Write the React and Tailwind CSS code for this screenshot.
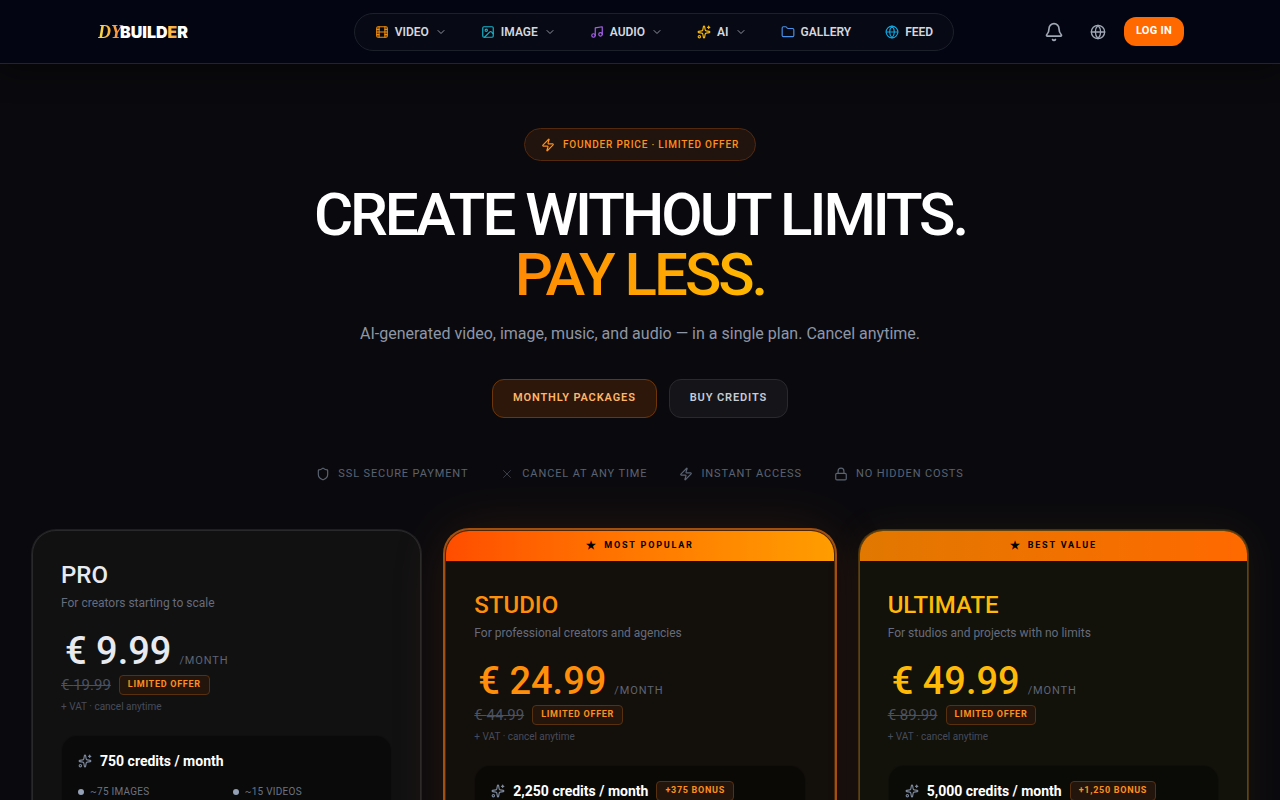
import React, { useState } from 'react';
import clsx from 'clsx';
import {
  Bell,
  ChevronDown,
  Film,
  Folder,
  Globe,
  Image,
  Lock,
  Music,
  Shield,
  Sparkles,
  X,
  Zap,
} from 'lucide-react';

const NAV_ITEMS = [
  { label: 'VIDEO', icon: Film, color: 'text-[#f08c0a]', menu: true },
  { label: 'IMAGE', icon: Image, color: 'text-[#14b4cc]', menu: true },
  { label: 'AUDIO', icon: Music, color: 'text-[#a763e8]', menu: true },
  { label: 'AI', icon: Sparkles, color: 'text-[#f5b70c]', menu: true },
  { label: 'GALLERY', icon: Folder, color: 'text-[#4a90e8]' },
  { label: 'FEED', icon: Globe, color: 'text-[#10a5e0]' },
];

const TRUST_ITEMS = [
  { label: 'SSL SECURE PAYMENT', icon: Shield, stroke: 2 },
  { label: 'CANCEL AT ANY TIME', icon: X, stroke: 1 },
  { label: 'INSTANT ACCESS', icon: Zap, stroke: 2 },
  { label: 'NO HIDDEN COSTS', icon: Lock, stroke: 2 },
];

const PLANS = [
  {
    name: 'PRO',
    tagline: 'For creators starting to scale',
    price: '9.99',
    oldPrice: '19.99',
    credits: '750',
    features: ['~75 IMAGES', '~15 VIDEOS'],
    card: 'border-[#29292b] bg-[#111112] shadow-[0_0_0_1px_#1f1f21]',
    accent: 'text-[#e8eaf0]',
  },
  {
    name: 'STUDIO',
    tagline: 'For professional creators and agencies',
    price: '24.99',
    oldPrice: '44.99',
    credits: '2,250',
    bonus: '+375 BONUS',
    ribbon: 'MOST POPULAR',
    features: ['~225 IMAGES', '~45 VIDEOS'],
    card: 'border-[#4d260c] bg-[#130f0b] shadow-[0_0_0_2px_#a3500f,0_0_60px_rgba(255,115,0,0.12)]',
    ribbonColor: 'bg-linear-to-r from-[#ff4d00] to-[#ff9d00]',
    accent: 'text-[#ff8f0a]',
  },
  {
    name: 'ULTIMATE',
    tagline: 'For studios and projects with no limits',
    price: '49.99',
    oldPrice: '89.99',
    credits: '5,000',
    bonus: '+1,250 BONUS',
    ribbon: 'BEST VALUE',
    features: ['~500 IMAGES', '~100 VIDEOS'],
    card: 'border-[#60430f] bg-[#12110a] shadow-[0_0_0_1px_#4a340f,0_0_40px_rgba(254,154,0,0.07)]',
    ribbonColor: 'bg-linear-to-r from-[#e17800] to-[#ff6900]',
    accent: 'text-[#ffba08]',
  },
];

const Logo = () => (
  <a href="#" aria-label="DX Builder" className="flex w-44 items-center pl-0.5 leading-none">
    <span className="bg-linear-to-r from-[#f7e04a] to-[#f7793b] bg-clip-text pr-0.5 font-['Liberation_Serif'] text-lg leading-none font-bold italic text-transparent">
      DY
    </span>
    <span className="-ml-1 font-['Inter'] text-base font-black text-white">
      BUILD
      <span className="bg-linear-to-r from-[#ffc640] to-[#f79a4a] bg-clip-text text-transparent">E</span>R
    </span>
  </a>
);

const Header = () => (
  <header className="border-b border-[#242428] bg-[#030612] shadow-[0_4px_30px_rgba(0,0,0,0.5)]">
    <div className="flex h-[63px] items-center justify-between px-24">
      <Logo />

      <nav className="flex h-[38px] items-center gap-0.5 rounded-full border border-[#1c2029] bg-[#070a14] px-1">
        {NAV_ITEMS.map(({ label, icon: Icon, color, menu }) => (
          <button
            key={label}
            type="button"
            className="flex items-center gap-1.5 px-4 text-xs font-semibold text-[#d3d7df]"
          >
            <Icon size={14} className={color} />
            {label}
            {menu && <ChevronDown size={12} className="text-[#8d93a0]" />}
          </button>
        ))}
      </nav>

      <div className="flex items-center gap-2">
        <button type="button" aria-label="Notifications" className="flex size-9 items-center justify-center text-[#a0a7b5]">
          <Bell size={20} />
        </button>
        <button type="button" aria-label="Language" className="flex size-9 items-center justify-center text-[#a0a7b5]">
          <Globe size={16} />
        </button>
        <button type="button" className="h-[29px] rounded-xl bg-[#ff6900] px-3 text-[11px] font-bold tracking-wide text-white">
          LOG IN
        </button>
      </div>
    </div>
  </header>
);

const Hero = () => {
  const [tab, setTab] = useState('monthly');

  const tabClass = (name) =>
    clsx(
      'h-[39px] rounded-xl border px-5 text-[11px] font-semibold tracking-[0.08em]',
      tab === name
        ? 'border-[#6e3608] bg-[#2d170b] text-[#ffb668]'
        : 'border-[#29292e] bg-[#151519] text-[#c8ccd6]'
    );

  return (
    <section className="flex flex-col items-center px-8 pt-16 text-center">
      <div className="flex h-[33px] items-center gap-2 rounded-full border border-[#54290d] bg-[#21130d] px-4 text-[10px] font-medium tracking-[0.08em] text-[#ff8f1c]">
        <Zap size={14} />
        FOUNDER PRICE · LIMITED OFFER
      </div>

      <h1 className="mt-6 text-6xl leading-none font-medium tracking-tighter text-white">
        CREATE WITHOUT LIMITS.
        <br />
        <span className="bg-linear-to-r from-[#ff8904] to-[#ffb900] bg-clip-text text-transparent">
          PAY LESS.
        </span>
      </h1>

      <p className="mt-4 text-base leading-[26px] text-[#8f96a6]">
        AI-generated video, image, music, and audio — in a single plan. Cancel anytime.
      </p>

      <div className="mt-8 flex gap-3">
        <button type="button" className={tabClass('monthly')} onClick={() => setTab('monthly')}>
          MONTHLY PACKAGES
        </button>
        <button type="button" className={tabClass('credits')} onClick={() => setTab('credits')}>
          BUY CREDITS
        </button>
      </div>

      <ul className="mt-12 flex flex-wrap justify-center gap-8 text-[11px] leading-4 tracking-[0.08em] text-[#5b6372]">
        {TRUST_ITEMS.map(({ label, icon: Icon, stroke }) => (
          <li key={label} className="flex items-center gap-2">
            <Icon size={14} strokeWidth={stroke} />
            {label}
          </li>
        ))}
      </ul>
    </section>
  );
};

const Badge = ({ children }) => (
  <span className="flex h-5 items-center rounded-sm border border-[#57300f] bg-[#24150c] px-2 text-[9px] font-bold tracking-[0.08em] text-[#ff8f1c]">
    {children}
  </span>
);

const PlanCard = ({ plan }) => (
  <article className={clsx('overflow-hidden rounded-3xl border', plan.card)}>
    {plan.ribbon && (
      <div
        className={clsx(
          'flex h-[30px] items-center justify-center gap-2 text-[9px] font-bold tracking-[0.2em] text-black',
          plan.ribbonColor
        )}
      >
        <span className="text-[11px] tracking-normal">★</span>
        {plan.ribbon}
      </div>
    )}

    <div className="p-7">
      <h2 className={clsx('text-2xl font-medium', plan.accent)}>{plan.name}</h2>
      <p className="mt-1 text-xs text-[#666c7b]">{plan.tagline}</p>

      {/* Price */}
      <div className="mt-5 flex items-baseline gap-2 pl-1">
        <span className={clsx('text-[38px] leading-10 font-medium', plan.accent)}>€ {plan.price}</span>
        <span className="text-[11px] tracking-[0.08em] text-[#5f6573]">/MONTH</span>
      </div>
      <div className="mt-1 flex items-center gap-2">
        <s className="text-[15px] leading-5 text-[#4a5162]">€ {plan.oldPrice}</s>
        <Badge>LIMITED OFFER</Badge>
      </div>
      <p className="mt-1 text-[10px] leading-4 text-[#474c5a]">+ VAT · cancel anytime</p>

      {/* Credits */}
      <div className="mt-5 rounded-2xl border border-white/2 bg-black/40 p-4">
        <div className="flex h-[18px] items-center gap-2">
          <Sparkles size={14} className="text-[#7b879b]" />
          <span className="text-sm font-bold text-white">{plan.credits} credits / month</span>
          {plan.bonus && <Badge>{plan.bonus}</Badge>}
        </div>
        <ul className="mt-3.5 grid grid-cols-2 gap-x-3 gap-y-2 text-[10px] leading-4 tracking-wide text-[#6c7382]">
          {plan.features.map((feature) => (
            <li key={feature} className="flex items-center gap-1.5">
              <span className="size-1.5 rounded-full bg-[#94a0b5]" />
              {feature}
            </li>
          ))}
        </ul>
      </div>
    </div>
  </article>
);

const App = () => (
  <div className="min-h-screen bg-[#0a0a0e] font-['Roboto',sans-serif]">
    <Header />
    <main>
      <Hero />
      <section className="mt-12 grid grid-cols-3 items-start gap-6 px-8 pb-16">
        {PLANS.map((plan) => (
          <PlanCard key={plan.name} plan={plan} />
        ))}
      </section>
    </main>
  </div>
);

export default App;
